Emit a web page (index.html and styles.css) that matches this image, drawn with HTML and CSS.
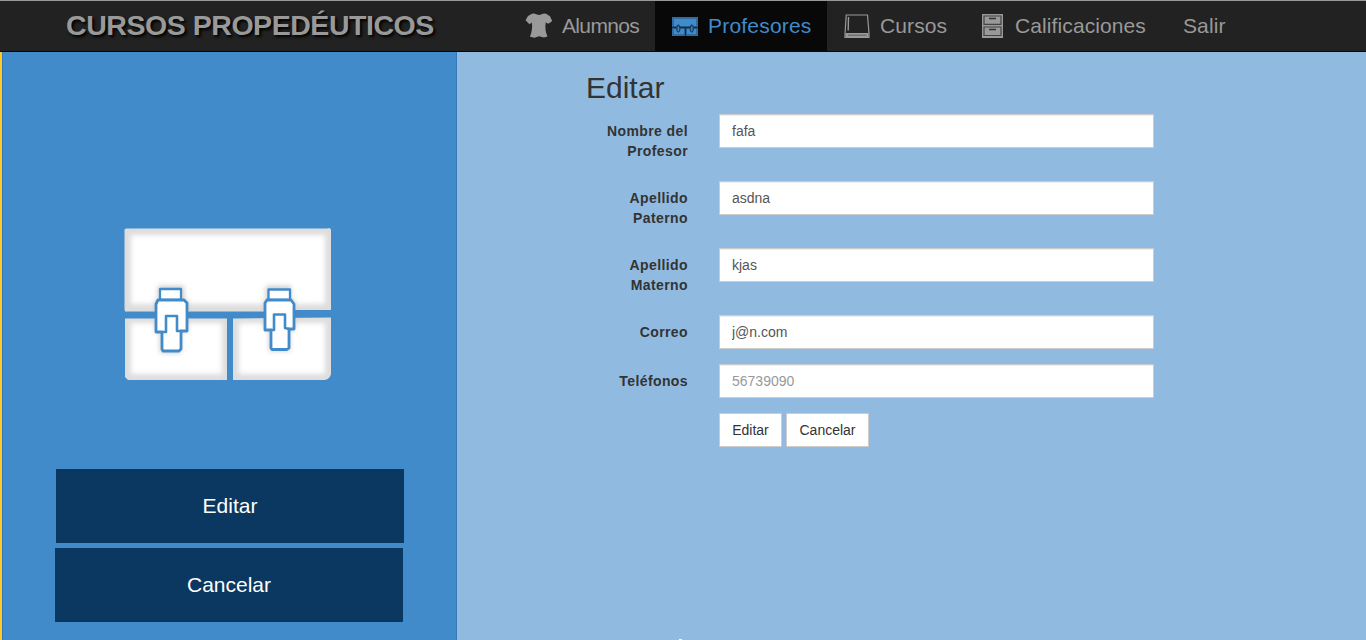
FILE: index.html
```html
<!DOCTYPE html>
<html lang="es">
<head>
<meta charset="utf-8">
<title>Cursos Propedéuticos</title>
<link rel="stylesheet" href="styles.css">
</head>
<body>
<header class="navbar">
  <a class="brand">CURSOS PROPEDÉUTICOS</a>
  <nav class="menu">
    <a class="item item-students">
      <svg class="icon" width="28" height="26" viewBox="0 0 28 26"><path d="M7 .8Q8.5 0 10 .8Q14 3 18 .8Q19.500 0 21 .8L25 3.200 27.200 8 23.500 10.800 20.700 9.500Q19.500 17 22.500 23.500L19 24.400 14 23.200 9.500 24.700 5 23.700Q8 16 6.800 9.500L4.500 11.200.5 7.200 3 3Z" fill="#999"/></svg>
      <span class="text">Alumnos</span></a>
    <a class="item item-teachers active">
      <svg class="icon" width="26" height="21" viewBox="0 0 26 21"><path d="M0 1H26V20H0Z" fill="#2f6ca3"/><path d="M2 3H24V10H2ZM2 13H12V18H2ZM15 13H24V18H15Z" fill="#428bca"/><path d="M0 11.500H26M13.500 12V20" stroke="#122f49" stroke-width="1.300"/><g fill="#38597a" stroke="#173c5d"><ellipse cx="6.300" cy="12.500" rx="1.700" ry="3.700"/><ellipse cx="19.800" cy="12.500" rx="1.700" ry="3.700"/></g><path d="M6.300 11v4M19.800 11v4" stroke="#428bca"/></svg>
      <span class="text">Profesores</span></a>
    <a class="item item-courses">
      <svg class="icon" width="26" height="25" viewBox="0 0 26 25"><path d="M2.200 1H23.500L25 19.500V23.500H1V20Z" fill="none" stroke="#999" stroke-width="1.200"/><path d="M1.500 19H24.500V23.500H1.500Z" fill="#999"/><path d="M4 21.200H22.500" stroke="#666" stroke-width="1.200"/><path d="M4.500 3L4.200 16.500" stroke="#999" stroke-width="1.400"/></svg>
      <span class="text">Cursos</span></a>
    <a class="item item-grades">
      <svg class="icon" width="21" height="24" viewBox="0 0 21 24"><path d="M0 0H21V24H0Z" fill="#999"/><path d="M2 2H19V10.300H2ZM2 13H19V21.500H2Z" fill="#999" stroke="#444" stroke-width="1.200"/><path d="M7 4.500H14M7 15.500H14" stroke="#333" stroke-width="1.300"/></svg>
      <span class="text">Calificaciones</span></a>
    <a class="item item-exit"><span class="text">Salir</span></a>
  </nav>
</header>
<div class="page">
  <aside class="sidebar">
    <svg class="briefcase" width="210" height="156" viewBox="0 0 210 156">
      <defs>
        <filter id="soft" x="-20%" y="-20%" width="140%" height="140%"><feGaussianBlur stdDeviation="2.500"/></filter>
        <clipPath id="panels"><path d="M.5 2.500L2 1.500H203L205.500 1 207 2.500V83H166L140 84.500H1L.5 82ZM1 91.500H103V153H4L1 150ZM109 91.500L207 90.500V147Q206 152 201 153H109Z"/></clipPath>
      </defs>
      <g clip-path="url(#panels)">
        <path d="M0 0H210V156H0Z" fill="#ddd"/>
        <path d="M7 8H201V77H7ZM7 96H98V147H7ZM115 96H201V147H115Z" fill="#fff" filter="url(#soft)"/>
        <path d="M34 59H60V73H64V105H57V126H36V105H31V73H34ZM142 59H167V73H171V103H166V124H145V103H140V73H142Z" fill="#ccc" filter="url(#soft)"/>
      </g>
      <g fill="#fff" stroke="#428bca" stroke-width="2.300" stroke-linejoin="round">
        <path d="M36 62H57V73H36Z"/>
        <path d="M34 73H60L63 76V104H57V122L55 124H39L38 122V105H32V77Z" stroke-width="2.800"/>
        <path d="M39 105H42V89H53V104H57" fill="none" stroke-width="2.600"/>
        <path d="M144.500 62.500H166V73H144.500Z"/>
        <path d="M143 73H167L170 77V102H165V121L163 122.500H148L147 121V103H141V76Z" stroke-width="2.800"/>
        <path d="M147 103H150V87.500H161V101L165 102" fill="none" stroke-width="2.600"/>
      </g>
    </svg>
    <div class="actions">
      <a class="action action-edit">Editar</a>
      <a class="action action-cancel">Cancelar</a>
    </div>
  </aside>
  <main class="content">
    <form class="form">
      <h1 class="heading">Editar</h1>
      <div class="row"><label class="label">Nombre del Profesor</label><input class="field" value="fafa"></div>
      <div class="row"><label class="label">Apellido Paterno</label><input class="field" value="asdna"></div>
      <div class="row"><label class="label">Apellido Materno</label><input class="field" value="kjas"></div>
      <div class="row"><label class="label">Correo</label><input class="field" value="j@n.com"></div>
      <div class="row"><label class="label">Teléfonos</label><input class="field" placeholder="56739090"></div>
      <div class="buttons"><button class="button button-edit" type="button">Editar</button><button class="button button-cancel" type="button">Cancelar</button></div>
    </form>
    <span class="speck"></span>
  </main>
</div>
</body>
</html>
```
FILE: styles.css
```css
* { box-sizing: border-box; }
body {
  margin: 0;
  height: 640px;
  overflow: hidden;
  background: #90bae0;
  font-family: "Liberation Sans", Arial, sans-serif;
  font-size: 14px;
  line-height: 20px;
  color: #333;
}
.navbar {
  display: flex;
  height: 52px;
  background: #222;
  border-top: 1px solid #999;
  border-bottom: 1px solid #080808;
}
.brand {
  width: 443px;
  margin-left: 66px;
  padding-top: 9px;
  font-size: 28.5px;
  font-weight: bold;
  line-height: 30px;
  letter-spacing: -.45px;
  color: #999;
  text-shadow: 2px 2px 3px #000;
  white-space: nowrap;
}
.menu { display: flex; }
.item {
  display: flex;
  align-items: center;
  height: 50px;
  padding-left: 17px;
  font-size: 21px;
  letter-spacing: .1px;
  color: #999;
  white-space: nowrap;
}
.icon { display: block; flex: none; }
.text { line-height: 24px; }
.item-students { width: 146px; padding-left: 16px; }
.item-students .text { margin-left: 9px; letter-spacing: -.65px; }
.item-teachers { width: 172px; }
.item-teachers .text { margin-left: 10px; letter-spacing: .2px; }
.item-courses { width: 138px; }
.item-courses .text { margin-left: 10px; }
.item-grades { width: 201px; }
.item-grades .text { margin-left: 12px; }
.item-exit { padding-left: 17px; }
.active { background: #080808; color: #428bca; }
.page {
  display: flex;
  height: 588px;
  border-left: 2px solid #ffca28;
}
.sidebar {
  width: 455px;
  padding-top: 175px;
  background: #428bca;
  border: solid #357ab8;
  border-width: 0 1px;
}
.briefcase { display: block; margin-left: 121px; }
.actions {
  display: flex;
  flex-direction: column;
  gap: 5px;
  margin: 86px 0 0 52px;
}
.action {
  width: 348px;
  height: 74px;
  background: #0b3860;
  color: #fff;
  font-size: 21px;
  line-height: 74px;
  text-align: center;
}
.action-edit { margin-left: 1px; }
.content { flex: 1; }
.form { width: 567px; margin-left: 129px; padding-top: 19px; }
.heading {
  margin: 0 0 10px;
  font-size: 30px;
  font-weight: normal;
  line-height: 33px;
}
.row {
  display: grid;
  grid-template-columns: 102px 435px;
  column-gap: 31px;
  align-items: start;
  margin-bottom: 15px;
}
.label {
  padding-top: 7px;
  margin-bottom: 5px;
  font-weight: bold;
  letter-spacing: .4px;
  text-align: right;
}
.row:nth-of-type(n+4) .label { margin-bottom: 0; }
.field {
  width: 435px;
  height: 34px;
  padding: 6px 12px;
  border: 1px solid #ccc;
  border-radius: 0;
  background: #fff;
  box-shadow: inset 0 1px 1px rgba(0,0,0,.075);
  font: 14px/20px "Liberation Sans", Arial, sans-serif;
  color: #555;
}
.field::placeholder { color: #999; opacity: 1; }
.buttons { display: flex; gap: 4px; margin-left: 133px; }
.button {
  height: 34px;
  padding: 0;
  border: 1px solid #ccc;
  background: #fff;
  color: #333;
  font: 14px/20px "Liberation Sans", Arial, sans-serif;
}
.button-edit { width: 63px; }
.button-cancel { width: 83px; }
.speck {
  position: absolute;
  left: 679px;
  top: 639px;
  width: 3px;
  height: 1px;
  background: #fff;
}
```
